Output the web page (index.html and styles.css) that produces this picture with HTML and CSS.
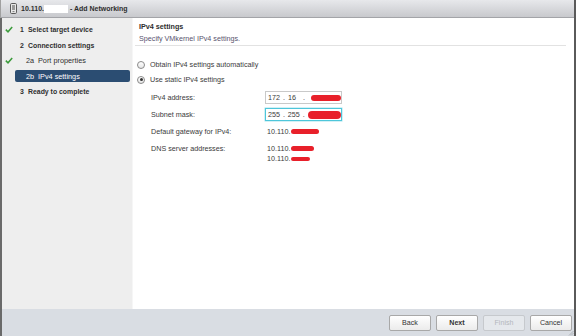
FILE: index.html
```html
<!DOCTYPE html>
<html>
<head>
<meta charset="utf-8">
<link rel="stylesheet" href="styles.css">
</head>
<body>
<div class="window">
  <div class="titlebar">
    <svg class="host-icon" width="7" height="11" viewBox="0 0 7 11"><rect x="0.5" y="0.5" width="6" height="10" rx="1.2" fill="#e8e8e8" stroke="#5a5a5a"/><rect x="2" y="2" width="3" height="5" fill="#9a9a9a"/><line x1="2.5" y1="8.6" x2="4.5" y2="8.6" stroke="#5a5a5a" stroke-width="0.8"/></svg>
    <span class="title">10.110.<span class="redact-white"></span> - Add Networking</span>
  </div>
  <div class="main">
    <nav class="sidebar">
      <div class="step main-step"><span class="check"><svg width="8" height="7" viewBox="0 0 8 7"><path d="M0.8 3.6 L3 5.8 L7.2 0.9" fill="none" stroke="#3b9b3b" stroke-width="1.5"/></svg></span><span class="label"><span class="num">1</span>Select target device</span></div>
      <div class="step main-step"><span class="check"></span><span class="label"><span class="num">2</span>Connection settings</span></div>
      <div class="step sub-step"><span class="check"><svg width="8" height="7" viewBox="0 0 8 7"><path d="M0.8 3.6 L3 5.8 L7.2 0.9" fill="none" stroke="#3b9b3b" stroke-width="1.5"/></svg></span><span class="label"><span class="num">2a</span>Port properties</span></div>
      <div class="step sub-step selected"><span class="check"></span><span class="label"><span class="num">2b</span>IPv4 settings</span></div>
      <div class="step main-step"><span class="check"></span><span class="label"><span class="num">3</span>Ready to complete</span></div>
    </nav>
    <section class="content">
      <div class="header">
        <div class="h-title">IPv4 settings</div>
        <div class="h-desc">Specify VMkernel IPv4 settings.</div>
      </div>
      <div class="radios">
        <div class="radio-row"><span class="radio"></span>Obtain IPv4 settings automatically</div>
        <div class="radio-row"><span class="radio checked"></span>Use static IPv4 settings</div>
      </div>
      <div class="form">
        <div class="f-label">IPv4 address:</div>
        <div class="f-value"><div class="ipbox"><span class="seg">172</span><span class="dot">.</span><span class="seg">16</span><span class="dot">.</span><span class="blob blob-a"></span></div></div>
        <div class="f-label">Subnet mask:</div>
        <div class="f-value"><div class="ipbox focused"><span class="seg">255</span><span class="dot">.</span><span class="seg">255</span><span class="dot">.</span><span class="blob blob-b"></span></div></div>
        <div class="f-label">Default gateway for IPv4:</div>
        <div class="f-value text-value">10.110.<span class="blob blob-c"></span></div>
        <div class="f-label dns">DNS server addresses:</div>
        <div class="f-value dns">
          <div>10.110.<span class="blob blob-d"></span></div>
          <div>10.110.<span class="blob blob-e"></span></div>
        </div>
      </div>
    </section>
  </div>
  <div class="footer">
    <button class="btn">Back</button>
    <button class="btn primary">Next</button>
    <button class="btn disabled">Finish</button>
    <button class="btn">Cancel</button>
    <svg class="grip" width="6" height="6" viewBox="0 0 6 6"><path d="M5.5 1 L1 5.5 M5.5 3 L3 5.5 M5.5 5 L5 5.5" stroke="#9a9ea4" stroke-width="0.7"/></svg>
  </div>
</div>
</body>
</html>
```
FILE: styles.css
```css
* { box-sizing: border-box; }
html, body { margin: 0; padding: 0; }
body {
  width: 576px;
  height: 336px;
  overflow: hidden;
  font-family: "Liberation Sans", Arial, sans-serif;
  font-size: 7.2px;
  color: #3a3a3a;
  background: #fff;
}
.window {
  width: 576px;
  height: 336px;
  display: flex;
  flex-direction: column;
  border-right: 2px solid #5a5a5a;
  position: relative;
}
.titlebar {
  height: 18px;
  flex: none;
  display: flex;
  align-items: center;
  padding-left: 9px;
  background: linear-gradient(#e7e8eb, #c8c9cd);
  border-bottom: 1px solid #a3a4a8;
  border-left: 1px solid #a0a0a0;
}
.host-icon { display: block; margin-top: -1px; }
.title {
  margin-left: 4px;
  font-weight: bold;
  font-size: 7px;
  color: #2e2e2e;
  display: flex;
  align-items: center;
  white-space: pre;
}
.redact-white {
  display: inline-block;
  width: 24px;
  height: 8px;
  background: #fff;
}
.main {
  flex: 1;
  display: flex;
  border-left: 2px solid #6a6a6a;
  min-height: 0;
}
.sidebar {
  width: 131px;
  flex: none;
  background: #eeeeee;
  border-right: 1px solid #f6f6f6;
  padding-top: 4px;
  padding-right: 2px;
}
.step {
  height: 15.5px;
  display: flex;
  align-items: center;
  padding-left: 3px;
}
.check {
  width: 10px;
  flex: none;
  display: flex;
  align-items: center;
}
.check svg { display: block; }
.label {
  flex: 1;
  height: 12px;
  display: flex;
  align-items: center;
  border-radius: 2px;
  white-space: nowrap;
  color: #2e2e2e;
}
.main-step .label { padding-left: 5px; font-weight: bold; font-size: 6.9px; }
.main-step .num { width: 8px; }
.sub-step .label { padding-left: 11px; font-size: 7.3px; }
.sub-step .num { width: 12px; }
.num { display: inline-block; flex: none; }
.selected .label { background: #2b4d72; color: #fff; }

.content {
  flex: 1;
  background: #fff;
  padding: 2px 8px 0 2px;
}
.header {
  padding: 1px 0 1px 4px;
  border-bottom: 1px solid #e2e2e2;
}
.h-title {
  line-height: 12px;
  font-weight: bold;
  color: #2e2e2e;
}
.h-desc {
  line-height: 11px;
  color: #58536e;
}
.radios {
  margin-top: 11px;
  padding-left: 2px;
}
.radio-row {
  height: 15px;
  display: flex;
  align-items: center;
  color: #3a3a3a;
}
.radio {
  width: 8px;
  height: 8px;
  border-radius: 50%;
  border: 1px solid #8a8a8a;
  background: linear-gradient(#ffffff, #e6e6e6);
  margin-right: 5px;
  position: relative;
  flex: none;
}
.radio.checked::after {
  content: "";
  position: absolute;
  left: 1.5px;
  top: 1.5px;
  width: 3px;
  height: 3px;
  border-radius: 50%;
  background: #333;
}
.form {
  margin-top: 2px;
  padding-left: 16px;
  display: grid;
  grid-template-columns: 114px 1fr;
  grid-auto-rows: 17px;
}
.f-label, .f-value {
  display: flex;
  align-items: center;
  color: #3a3a3a;
}
.text-value { padding-left: 2px; }
.f-label.dns, .f-value.dns {
  display: block;
  padding-top: 3.5px;
  line-height: 10px;
}
.f-value.dns { padding-left: 2px; }
.ipbox {
  width: 77px;
  height: 13px;
  border: 1px solid #c9c9c9;
  background: #fff;
  display: flex;
  align-items: center;
  padding-left: 2px;
}
.ipbox.focused {
  border-color: #4ec6da;
  box-shadow: 0 0 0 0.5px #a6e4ee;
}
.seg { width: 12px; }
.dot { width: 8px; text-align: center; }
.blob {
  display: inline-block;
  background: #e8202a;
  border-radius: 4px;
  vertical-align: middle;
}
.blob-a { width: 30px; height: 6px; margin-left: 3px; }
.blob-b { width: 34px; height: 8px; }
.blob-c { width: 28px; height: 5px; margin-left: 1px; }
.blob-d { width: 23px; height: 5px; margin-left: 1px; }
.blob-e { width: 19px; height: 4px; margin-left: 1px; }

.footer {
  height: 27px;
  flex: none;
  background: #d9dde3;
  border-left: 2px solid #6a6a6a;
  display: flex;
  justify-content: flex-end;
  align-items: flex-start;
  padding: 6px 2px 0 0;
  gap: 5px;
  position: relative;
}
.btn {
  width: 42px;
  height: 16px;
  margin: 0;
  padding: 0;
  font-family: "Liberation Sans", Arial, sans-serif;
  font-size: 7.1px;
  color: #333;
  border: 1px solid #a8a8a8;
  border-radius: 2px;
  background: linear-gradient(#ffffff, #ebebeb);
}
.btn.primary { font-weight: bold; }
.btn.disabled {
  color: #b4b7bc;
  border-color: #c6c9cd;
  background: #e5e8ec;
}
.grip {
  position: absolute;
  right: 0;
  bottom: 0;
}
```
